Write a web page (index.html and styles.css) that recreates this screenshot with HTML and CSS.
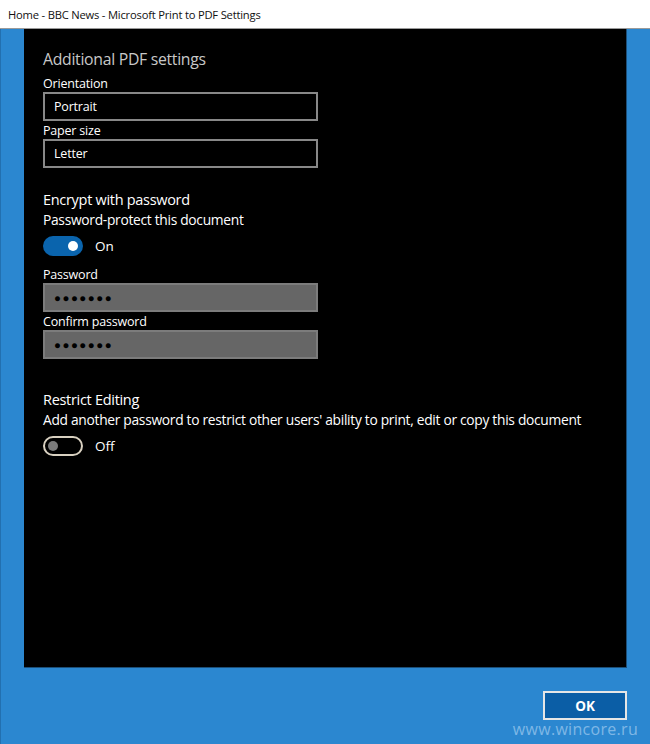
FILE: index.html
```html
<!DOCTYPE html>
<html lang="en">
<head>
    <meta charset="UTF-8">
    <title>Microsoft Print to PDF Settings</title>
    <link rel="stylesheet" href="styles.css">
</head>
<body>
    <div class="window">
        <div class="titlebar">Home - BBC News - Microsoft Print to PDF Settings</div>
        <div class="client">
            <div class="panel">
                <h1>Additional PDF settings</h1>
                <div class="label">Orientation</div>
                <div class="select">Portrait</div>
                <div class="label">Paper size</div>
                <div class="select">Letter</div>

                <div class="section">
                    <div class="section-title">Encrypt with password</div>
                    <div class="section-desc">Password-protect this document</div>
                    <div class="toggle-row">
                        <span class="toggle on"><span class="knob"></span></span>
                        <span class="toggle-text">On</span>
                    </div>
                    <div class="label">Password</div>
                    <div class="pass">&#9679;&#9679;&#9679;&#9679;&#9679;&#9679;&#9679;</div>
                    <div class="label">Confirm password</div>
                    <div class="pass">&#9679;&#9679;&#9679;&#9679;&#9679;&#9679;&#9679;</div>
                </div>

                <div class="section restrict">
                    <div class="section-title">Restrict Editing</div>
                    <div class="section-desc">Add another password to restrict other users' ability to print, edit or copy this document</div>
                    <div class="toggle-row">
                        <span class="toggle off"><span class="knob"></span></span>
                        <span class="toggle-text">Off</span>
                    </div>
                </div>
            </div>
            <div class="footer">
                <button class="ok">OK</button>
            </div>
            <div class="watermark">www.wincore.ru</div>
        </div>
    </div>
</body>
</html>
```

FILE: styles.css
```css
body { margin: 0; font-family: "Open Sans", "Noto Sans", Arial, sans-serif; background: #2b87d0; }
.window { width: 650px; height: 744px; display: flex; flex-direction: column; }
.titlebar { height: 28px; background: #fff; border-bottom: 1px solid #9a9a9a; font-size: 11.2px; color: #111; line-height: 29px; padding-left: 8px; letter-spacing: -0.2px; }
.client { position: relative; flex: 1; background: #2b87d0; padding: 0 23px 0 23px; border-left: 1px solid #2270b0; }
.panel { height: 639px; background: #000; padding: 0 0 0 19px; color: #fff; box-sizing: border-box; border-right: 1px solid #1d4f78; border-bottom: 1px solid #1d4f78; }
h1 { margin: 0 0 5px 0; padding-top: 19px; font-size: 15.8px; font-weight: 400; color: #c8c8c8; line-height: 22px; letter-spacing: -0.3px; }
.label { font-size: 12.5px; line-height: 17px; color: #fff; margin-top: 1px; letter-spacing: -0.2px; }
.select { width: 262px; height: 25px; border: 2px solid #888; font-size: 12.5px; line-height: 25px; padding-left: 9px; box-sizing: content-box; letter-spacing: -0.2px; }
.section { margin-top: 22px; }
.section-title { font-size: 14.5px; line-height: 20px; color: #fff; letter-spacing: -0.3px; }
.section-desc { font-size: 13.8px; line-height: 19px; color: #fff; letter-spacing: -0.3px; }
.toggle-row { display: flex; align-items: center; height: 20px; margin-top: 7px; margin-bottom: 10px; }
.toggle { width: 40px; height: 20px; border-radius: 10px; box-sizing: border-box; display: flex; align-items: center; }
.toggle .knob { width: 10px; height: 10px; border-radius: 50%; }
.toggle.on { background: #0a64ad; justify-content: flex-end; padding-right: 5px; }
.toggle.on .knob { background: #fff; }
.toggle.off { border: 2px solid #d8d0c0; padding-left: 3px; }
.toggle.off .knob { background: #7a7a7a; }
.toggle-text { font-size: 13.5px; margin-left: 12px; color: #fff; }
.pass { width: 262px; height: 25px; background: #666; border: 2px solid #7c7c7c; font-size: 11.5px; line-height: 25px; padding-left: 9px; letter-spacing: 1.5px; color: #000; box-sizing: content-box; }
.restrict { margin-top: 31px; }
.footer { display: flex; justify-content: flex-end; padding-top: 23px; }
.ok { width: 84px; height: 29px; background: #0b5ea6; border: 2px solid #e6e6e6; color: #fff; font-family: "Open Sans", Arial, sans-serif; font-weight: 700; font-size: 13.5px; padding: 0; }
.watermark { position: absolute; right: 12px; bottom: 5px; font-family: "Open Sans", Arial, sans-serif; font-size: 16px; line-height: 19px; color: rgba(200, 225, 250, 0.55); letter-spacing: 0.3px; }
```
